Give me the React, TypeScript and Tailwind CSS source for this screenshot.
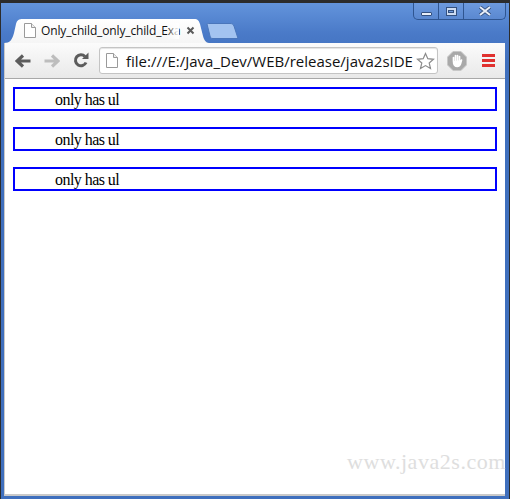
import React from "react";

const Row = () => (
  <div className="h-6 border-2 border-[#0000ff] pl-10 font-['Liberation_Serif',serif] text-base leading-[21px] tracking-[-0.55px] text-black">only has ul</div>
);

const Page = () => (
  <svg width="12" height="15" viewBox="0 0 12 15" className="shrink-0">
    <path d="M.5 .5H7.500L11.500 4.500V14.500H.5Z" fill="#fff" stroke="#9a9a9a" />
    <path d="M7.500 .5V4.500H11.500" fill="#eee" stroke="#9a9a9a" />
  </svg>
);

export default function App() {
  return (
    <div className="relative h-[499px] w-[510px] overflow-hidden bg-[#3f6fbd] font-['Open_Sans',sans-serif]">
      <div className="flex h-[499px] flex-col border-x border-t-[3px] border-[#2c2c2c] bg-[linear-gradient(#6394dc_0,#4a7ac8_30px,#3f6fbd_60px)]">
        {/* title bar */}
        <div className="relative flex h-10 shrink-0 items-end pl-[3px]">
          <svg width="205" height="25" viewBox="0 0 205 25" className="absolute left-[3px] top-[15px]">
            <defs>
              <linearGradient id="tabg" x1="0" y1="0" x2="0" y2="1">
                <stop offset="0" stopColor="#ffffff" />
                <stop offset="1" stopColor="#f5f5f5" />
              </linearGradient>
            </defs>
            <path d="M0 25C6 25 8 22 10 15L12 6C13 2 15 1 19 1H190C194 1 195 3 196 6L199 18C200 22 202 25 205 25Z" fill="url(#tabg)" />
          </svg>
          <svg width="34" height="17" viewBox="0 0 34 17" className="absolute left-[205px] top-[20px]">
            <path d="M1 1C1 .5 2 .5 3 .5H24C26 .5 27 1 28 3L32 15.500H7C5 15.500 4.500 15 4 13Z" fill="#a3c3f0" stroke="#4a76bb" />
          </svg>
          <div className="relative mb-[1px] flex h-6 w-[200px] items-center pl-[20px]">
            <Page />
            <div className="relative ml-[5px] mt-[2px] w-[138px] whitespace-nowrap text-[12px] leading-4 tracking-[-0.14px] text-[#111]">
              Only_child_only_child_Exa
              <div className="absolute inset-y-0 right-0 w-3 bg-gradient-to-r from-transparent to-white" />
            </div>
            <svg width="9" height="9" viewBox="0 0 9 9" className="ml-[7px]">
              <path d="M1.500 1.500L7.500 7.500M7.500 1.500L1.500 7.500" stroke="#5a5a5a" strokeWidth="2" />
            </svg>
          </div>
          {/* window controls */}
          <div className="absolute right-[3px] top-0 flex h-[17px] w-[93px] rounded-b-[5px] border border-t-0 border-[#2f5590] bg-[linear-gradient(#6d9ade,#5a88d0)]">
            <div className="flex w-[25px] items-end justify-center border-r border-[#2f5590] pb-[3px]">
              <div className="h-[4px] w-[11px] rounded-[1px] border border-[#33507f] bg-[#e8eef8]" />
            </div>
            <div className="flex w-[25px] items-center justify-center border-r border-[#2f5590]">
              <div className="flex h-[9px] w-[11px] items-center justify-center border border-[#33507f] bg-[#cddcf2]">
                <div className="h-[3px] w-[6px] border border-[#33507f] bg-[#6d9ade]" />
              </div>
            </div>
            <div className="flex flex-1 items-center justify-center">
              <svg width="14" height="10" viewBox="0 0 14 10">
                <path d="M2 1L12 9M12 1L2 9" stroke="#33507f" strokeWidth="3.600" />
                <path d="M2 1L12 9M12 1L2 9" stroke="#e8eef8" strokeWidth="2" />
              </svg>
            </div>
          </div>
        </div>

        {/* browser body */}
        <div className="mb-[3px] ml-[3px] mr-[4px] flex min-h-0 flex-1 flex-col border-b-2 border-l border-[#c9c9c9] bg-white">
          {/* toolbar */}
          <div className="flex h-9 shrink-0 items-center border-b border-[#a8a8a8] bg-[linear-gradient(#fbfbfb,#e9e9e9)] pl-[10px]">
            <svg width="16" height="16" viewBox="0 0 16 16" className="mt-[1px]">
              <path d="M15.500 8H3M8 2.500L2 8L8 13.500" fill="none" stroke="#5c5c5c" strokeWidth="3.200" />
            </svg>
            <svg width="16" height="16" viewBox="0 0 16 16" className="ml-[13px] mt-[1px]">
              <path d="M.5 8H13M8 2.500L14 8L8 13.500" fill="none" stroke="#bdbdbd" strokeWidth="3.200" />
            </svg>
            <svg width="16" height="17" viewBox="0 0 16 17" className="ml-[13px]">
              <path d="M13 10.500A5.500 5.500 0 1 1 12 4.500" fill="none" stroke="#5c5c5c" strokeWidth="3" />
              <path d="M9 7H15.500V.5Z" fill="#5c5c5c" />
            </svg>
            <div className="ml-[10px] flex h-[27px] w-[339px] items-center overflow-hidden rounded-[3px] border border-[#c4c4c4] bg-white pl-[6px] shadow-[inset_0_1px_1px_#e4e4e4]">
              <Page />
              <span className="ml-[8px] w-[290px] shrink-0 whitespace-nowrap text-[15px] leading-5 text-[#111]">file:///E:/Java_Dev/WEB/release/java2sIDE</span>
              <svg width="19" height="18" viewBox="0 0 19 18" className="shrink-0">
                <path d="M9.500 1.500L11.800 6.700L17.500 7.300L13.200 11L14.500 16.500L9.500 13.600L4.500 16.500L5.800 11L1.500 7.300L7.200 6.700Z" fill="#fff" stroke="#8c8c8c" strokeWidth="1.200" />
              </svg>
            </div>
            <svg width="20" height="20" viewBox="0 0 20 20" className="ml-[9px]">
              <path d="M6 .5H14L19.500 6V14L14 19.500H6L.5 14V6Z" fill="#a9a9a9" stroke="#c8c8c8" />
              <path d="M6.500 10V6.500M8.500 10V4.500M10.500 10V4.500M12.500 10V5.500M6.500 10C6.500 14 8 15.500 10.500 15.500C13 15.500 13.500 13 14.500 9" fill="#fff" stroke="#fff" strokeWidth="1.700" strokeLinecap="round" />
            </svg>
            <div className="ml-[15px] flex flex-col gap-[2px]">
              <div className="h-[3px] w-[13px] bg-[#e0312f]" />
              <div className="h-[3px] w-[13px] bg-[#e0312f]" />
              <div className="h-[3px] w-[13px] bg-[#e0312f]" />
            </div>
          </div>
          {/* page */}
          <div className="flex flex-1 flex-col gap-4 p-2">
            <Row />
            <Row />
            <Row />
          </div>
        </div>
      </div>
      <div className="absolute left-[347px] top-[450px] whitespace-nowrap font-['Liberation_Serif',serif] text-[22px] leading-6 tracking-[0.55px] text-[#dedede]">www.java2s.com</div>
    </div>
  );
}
